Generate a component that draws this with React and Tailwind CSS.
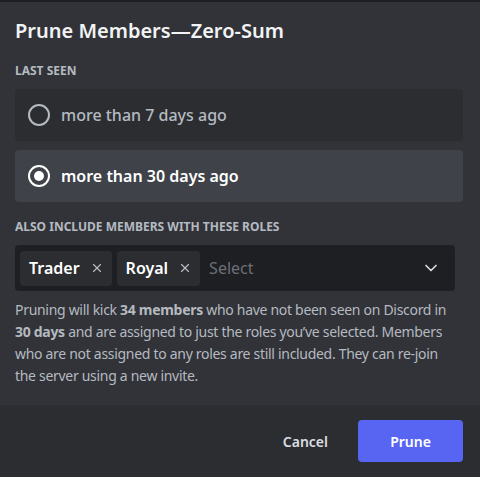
import { X, ChevronDown } from "lucide-react";

function Radio({ label, checked }) {
  return (
    <div
      className={`flex items-center h-[52px] px-[13px] rounded-[4px] ${
        checked ? "bg-[#404249] text-white" : "bg-[#2b2d31] text-[#b5bac1]"
      }`}
    >
      <div className="w-[22px] h-[22px] rounded-full border-2 border-current flex items-center justify-center">
        {checked && <div className="w-[10px] h-[10px] rounded-full bg-white" />}
      </div>
      <span className={`ml-[11px] text-[16px] ${checked ? "font-semibold" : "font-medium"}`}>
        {label}
      </span>
    </div>
  );
}

function Chip({ label }) {
  return (
    <div className="flex items-center h-[35px] pl-[9px] pr-[8px] bg-[#2b2d31] rounded-[4px] text-white text-[16px] font-semibold">
      {label}
      <X className="w-[14px] h-[14px] ml-[10px] text-[#b5bac1]" strokeWidth={2} />
    </div>
  );
}

export default function App() {
  return (
    <div
      className="w-[480px] h-[477px] bg-[#313338] flex flex-col border-t-[2px] border-[#1e1f22]"
      style={{ fontFamily: '"Noto Sans", "Open Sans", sans-serif' }}
    >
      <div className="flex-1 pl-[15px] pr-[17px]">
        <h1 className="mt-[15px] text-[20px] font-semibold text-[#f2f3f5] leading-[28px]">
          Prune Members—Zero-Sum
        </h1>

        <div className="mt-[18px] text-[12px] font-bold text-[#b5bac1] uppercase leading-[16px]">
          Last seen
        </div>
        <div className="mt-[10px] flex flex-col gap-[9px]">
          <Radio label="more than 7 days ago" />
          <Radio label="more than 30 days ago" checked />
        </div>

        <div className="mt-[17px] text-[12px] font-bold text-[#b5bac1] uppercase leading-[16px]">
          Also include members with these roles
        </div>
        <div className="mt-[10px] w-[440px] h-[46px] bg-[#1e1f22] rounded-[4px] flex items-center pl-[5px] pr-[14px] gap-[5px]">
          <Chip label="Trader" />
          <Chip label="Royal" />
          <span className="ml-[4px] text-[16px] text-[#6d6f78] flex-1">Select</span>
          <ChevronDown className="w-[20px] h-[20px] text-[#dbdee1]" strokeWidth={2} />
        </div>

        <p className="mt-[8px] text-[14px] leading-[22px] text-[#b5bac1] tracking-[-0.3px] whitespace-nowrap">
          Pruning will kick <strong className="font-bold">34 members</strong> who have not been seen on Discord in
          <br />
          <strong className="font-bold">30 days</strong> and are assigned to just the roles you’ve selected. Members
          <br />
          who are not assigned to any roles are still included. They can re-join
          <br />
          the server using a new invite.
        </p>
      </div>

      <div className="h-[72px] bg-[#2b2d31] flex items-center justify-end px-[17px]">
        <button className="h-[42px] px-[16px] text-[14px] font-semibold text-[#dbdee1] mr-[14px]">
          Cancel
        </button>
        <button className="h-[42px] w-[105px] rounded-[4px] bg-[#5865f2] text-[14px] font-semibold text-white">
          Prune
        </button>
      </div>
    </div>
  );
}
